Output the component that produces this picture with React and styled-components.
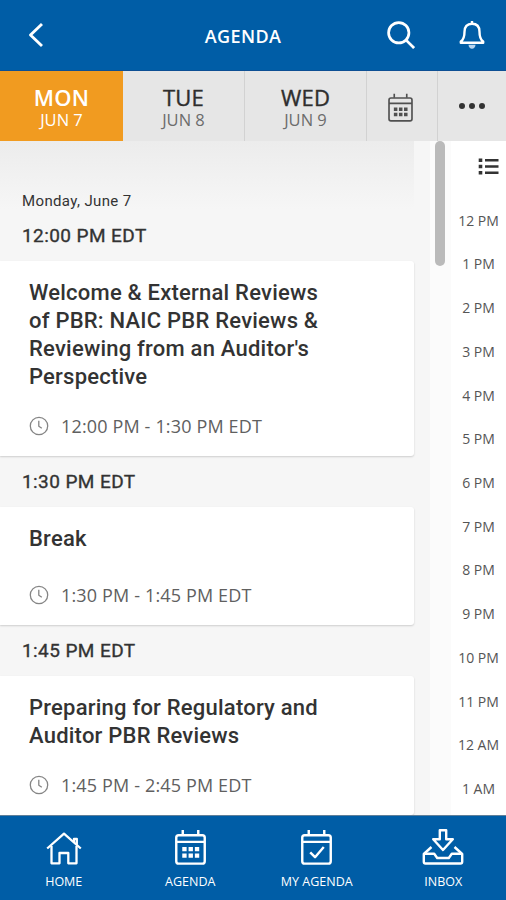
import styled, { createGlobalStyle } from "styled-components";

const days = [
  { name: "MON", date: "JUN 7", width: 123, active: true },
  { name: "TUE", date: "JUN 8", width: 122 },
  { name: "WED", date: "JUN 9", width: 122 },
];

const sessions = [
  {
    start: "12:00 PM EDT",
    title: [
      "Welcome & External Reviews",
      "of PBR: NAIC PBR Reviews &",
      "Reviewing from an Auditor's",
      "Perspective",
    ],
    time: "12:00 PM - 1:30 PM EDT",
  },
  { start: "1:30 PM EDT", title: ["Break"], time: "1:30 PM - 1:45 PM EDT" },
  {
    start: "1:45 PM EDT",
    title: ["Preparing for Regulatory and", "Auditor PBR Reviews"],
    time: "1:45 PM - 2:45 PM EDT",
  },
];

const hours = [
  "12 PM", "1 PM", "2 PM", "3 PM", "4 PM", "5 PM", "6 PM",
  "7 PM", "8 PM", "9 PM", "10 PM", "11 PM", "12 AM", "1 AM",
];

function BackIcon() {
  return (
    <Icon width="16" height="26" viewBox="0 0 16 26" $stroke={2.9}>
      <path d="M14 2 2.5 13 14 24" />
    </Icon>
  );
}

function SearchIcon() {
  return (
    <Icon width="28" height="28" viewBox="0 0 30 30" $stroke={2.9}>
      <circle cx="12.6" cy="12.6" r="10.9" />
      <path d="M20.2 20.2 29 29" />
    </Icon>
  );
}

function BellIcon() {
  return (
    <Icon width="28" height="30" viewBox="0 0 28 30" $stroke={2.4}>
      <path d="M2.800 22.800v-1.200C6 19.500 6.500 16.500 6.500 11.800C6.500 6.800 9 3.800 14 3.800s7.500 3 7.500 8c0 4.700.5 7.700 3.700 9.800v1.200z" />
      <path d="M14 1v2.500" />
      <path d="M10.500 24.800h7c0 2.300-1.500 4-3.500 4s-3.500-1.700-3.500-4z" fill="#b9d5ef" stroke="none" />
    </Icon>
  );
}

function CalendarIcon({ width, height, check, stroke }) {
  return (
    <Icon width={width} height={height} viewBox="0 0 32 37" $stroke={stroke}>
      <rect x="1.300" y="6.300" width="29.400" height="29.400" rx="2.500" />
      <path d="M1.300 13.200h29.400M8 1v5M24 1v5" />
      {check ? (
        <path d="M9.500 24l5 5 9-10.500" />
      ) : (
        <path
          d="M7.500 18.500h4.500V23H7.500zM14 18.500h4.500V23H14zM20.500 18.500H25V23h-4.500zM7.500 25.200h4.500v4.500H7.500zM14 25.200h4.500v4.500H14zM20.500 25.200H25v4.500h-4.500z"
          fill="currentColor"
          stroke="none"
        />
      )}
    </Icon>
  );
}

function HomeIcon() {
  return (
    <Icon width="36" height="33" viewBox="0 0 36 33" $stroke={2.3}>
      <path d="M1.200 16.500 18 1.700l16.800 14.800" />
      <path d="M5.500 14v17.300h8V21h8.800v10.300h8.200V14" />
      <path d="M28 10V6.800h2.800v6" />
    </Icon>
  );
}

function InboxIcon() {
  return (
    <Icon width="42" height="37" viewBox="0 0 42 37" $stroke={2.4}>
      <path d="M17.800 2.200h6.400v9h6.600L21 22 11.200 11.200h6.600z" />
      <path d="M9.500 19 1.800 26v7.800c0 1 .8 1.700 1.700 1.700h35c1 0 1.700-.7 1.700-1.700V26l-7.700-7" />
      <path d="M2 25.800h10.200l3 4.200h11.600l3-4.200H40" />
    </Icon>
  );
}

function ClockIcon() {
  return (
    <Icon width="20" height="20" viewBox="0 0 20 20" $stroke={1.3}>
      <circle cx="10" cy="10" r="8.700" />
      <path d="M9.800 4.800v5.500l3 2" />
    </Icon>
  );
}

function ListIcon() {
  return (
    <Icon width="21" height="17" viewBox="0 0 21 17" $stroke={2.4}>
      <path d="M7 2.200h13.500M7 8.500h13.500M7 14.800h13.500" />
      <path d="M.7 2.200h3.600M.7 8.500h3.600M.7 14.800h3.600" strokeWidth="3.400" />
    </Icon>
  );
}

function Session({ session }) {
  return (
    <>
      <StartTime>{session.start}</StartTime>
      <Card>
        <Title>
          {session.title.map((line) => (
            <TitleLine key={line}>{line}</TitleLine>
          ))}
        </Title>
        <TimeRow>
          <ClockIcon />
          <TimeText>{session.time}</TimeText>
        </TimeRow>
      </Card>
    </>
  );
}

export default function App() {
  return (
    <Screen>
      <GlobalStyle />
      <Header>
        <BackIcon />
        <Heading>AGENDA</Heading>
        <HeaderActions>
          <SearchIcon />
          <BellIcon />
        </HeaderActions>
      </Header>
      <DayBar>
        {days.map((day) => (
          <Day key={day.name} $width={day.width} $active={day.active}>
            <DayName $active={day.active}>{day.name}</DayName>
            <DayDate>{day.date}</DayDate>
          </Day>
        ))}
        <BarButton $width={71}>
          <CalendarIcon width={25} height={29} stroke={2.1} />
        </BarButton>
        <BarButton $width={68}>
          <Dots>
            <Dot />
            <Dot />
            <Dot />
          </Dots>
        </BarButton>
      </DayBar>
      <Body>
        <Agenda>
          <DateHeading>Monday, June 7</DateHeading>
          {sessions.map((session) => (
            <Session key={session.start} session={session} />
          ))}
        </Agenda>
        <ScrollTrack>
          <ScrollThumb />
        </ScrollTrack>
        <HourRail>
          <ListButton>
            <ListIcon />
          </ListButton>
          {hours.map((hour) => (
            <Hour key={hour}>{hour}</Hour>
          ))}
        </HourRail>
      </Body>
      <Footer>
        <NavItem>
          <HomeIcon />
          <NavLabel>HOME</NavLabel>
        </NavItem>
        <NavItem>
          <CalendarIcon width={31} height={36} stroke={2.5} />
          <NavLabel>AGENDA</NavLabel>
        </NavItem>
        <NavItem>
          <CalendarIcon width={31} height={36} stroke={2.5} check />
          <NavLabel>MY AGENDA</NavLabel>
        </NavItem>
        <NavItem>
          <InboxIcon />
          <NavLabel>INBOX</NavLabel>
        </NavItem>
      </Footer>
    </Screen>
  );
}

const GlobalStyle = createGlobalStyle`
  * {
    box-sizing: border-box;
  }
  body {
    margin: 0;
    font-family: Roboto, "Liberation Sans", sans-serif;
    color: #333;
  }
`;

const Screen = styled.div`
  display: flex;
  flex-direction: column;
  width: 506px;
  height: 900px;
  overflow: hidden;
  background: #fff;
`;

const Icon = styled.svg`
  display: block;
  flex: none;
  fill: none;
  stroke: currentColor;
  stroke-width: ${(p) => p.$stroke};
  stroke-linejoin: round;
`;

const Header = styled.header`
  display: grid;
  grid-template-columns: 120px 1fr 120px;
  align-items: center;
  flex: none;
  height: 71px;
  padding: 0 20px 0 28px;
  background: #005da6;
  border-bottom: 1px solid #0d4f94;
  color: #fff;
`;

const Heading = styled.h1`
  margin: 1px 0 0;
  padding-right: 28px;
  font: 600 18px/24px "Open Sans", sans-serif;
  letter-spacing: 0.4px;
  text-align: center;
`;

const HeaderActions = styled.div`
  display: flex;
  align-items: center;
  justify-content: flex-end;
  gap: 43px;
`;

const DayBar = styled.nav`
  display: flex;
  flex: none;
  height: 70px;
  background: #e6e6e6;
`;

const Day = styled.div`
  width: ${(p) => p.$width}px;
  padding-top: 12px;
  text-align: center;
  font-family: "Open Sans", sans-serif;
  background: ${(p) => (p.$active ? "#f19b20" : "transparent")};
  color: ${(p) => (p.$active ? "#fff" : "#6c6c6c")};
  border-right: ${(p) => (p.$active ? "none" : "1px solid #d2d2d2")};
`;

const DayName = styled.div`
  font-size: 22px;
  line-height: 28px;
  font-weight: ${(p) => (p.$active ? 600 : 500)};
  letter-spacing: 0.2px;
  color: ${(p) => (p.$active ? "#fff" : "#2e2e2e")};
  -webkit-text-stroke: ${(p) => (p.$active ? 0 : "0.4px")};
`;

const DayDate = styled.div`
  font-size: 16.5px;
  line-height: 18px;
`;

const BarButton = styled.div`
  display: flex;
  align-items: center;
  justify-content: center;
  width: ${(p) => p.$width}px;
  padding: 2px 3px 0 0;
  color: #505050;
  border-right: 1px solid #d2d2d2;

  &:last-child {
    padding-right: 0;
    border-right: none;
  }
`;

const Dots = styled.div`
  display: flex;
  gap: 4px;
  padding-bottom: 3px;
`;

const Dot = styled.span`
  width: 6px;
  height: 6px;
  border-radius: 50%;
  background: #333;
`;

const Body = styled.main`
  display: flex;
  flex: none;
  height: 674px;
  overflow: hidden;
`;

const Agenda = styled.section`
  width: 430px;
  padding-right: 16px;
  background: linear-gradient(#ececec, #f6f6f6 68px) 0 0 / 414px 100% no-repeat #f6f6f6;
`;

const DateHeading = styled.div`
  height: 68.5px;
  padding: 50px 0 0 22px;
  font-size: 15px;
  line-height: 20px;
  letter-spacing: 0.37px;
`;

const StartTime = styled.div`
  height: 51px;
  padding-left: 22px;
  font-size: 19px;
  font-weight: 400;
  line-height: 52px;
  letter-spacing: 0.42px;
  -webkit-text-stroke: 0.35px;
`;

const Card = styled.article`
  padding: 18px 0 18.7px 29px;
  background: #fff;
  border-radius: 0 3px 3px 0;
  box-shadow: 0 1px 2px rgba(0, 0, 0, 0.17);
`;

const Title = styled.h2`
  min-height: 34.5px;
  margin: 0 0 24.6px;
  font-size: 22px;
  font-weight: 500;
  line-height: 28px;
  letter-spacing: 0.22px;
`;

const TitleLine = styled.span`
  display: block;
  white-space: nowrap;
`;

const TimeRow = styled.div`
  display: flex;
  align-items: center;
  height: 22px;
  gap: 12px;
  color: #858585;
`;

const TimeText = styled.span`
  font: 400 18px/22px "Open Sans", sans-serif;
  letter-spacing: 0.15px;
  color: #606060;
`;

const ScrollTrack = styled.div`
  width: 21px;
  padding-left: 5px;
  background: #fbfbfb;
`;

const ScrollThumb = styled.div`
  width: 10px;
  height: 125px;
  border-radius: 5px;
  background: #bababa;
`;

const HourRail = styled.aside`
  width: 55px;
  background: #fff;
`;

const ListButton = styled.div`
  display: flex;
  justify-content: flex-end;
  height: 57.7px;
  padding: 17px 7px 0 0;
`;

const Hour = styled.div`
  height: 43.73px;
  font: 400 14px/43.73px "Open Sans", sans-serif;
  text-align: center;
  color: #555;
`;

const Footer = styled.footer`
  display: flex;
  flex: none;
  height: 85px;
  background: #005da6;
  border-top: 1px solid #5f7f99;
`;

const NavItem = styled.div`
  display: flex;
  flex-direction: column;
  align-items: center;
  justify-content: flex-end;
  width: 126.5px;
  padding: 0 0 9px 1px;
  color: #fff;

  svg {
    margin-bottom: 8px;
  }
`;

const NavLabel = styled.span`
  font: 400 12.5px/18px "Open Sans", sans-serif;
`;
